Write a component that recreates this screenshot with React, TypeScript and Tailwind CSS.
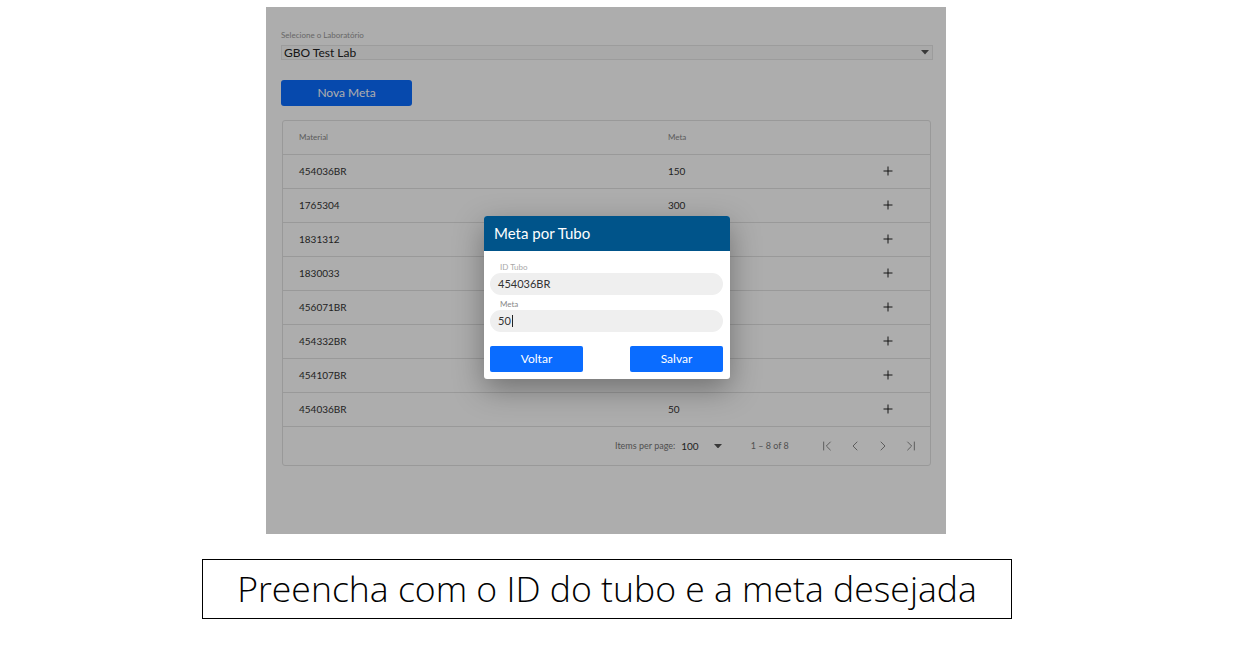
import { ChevronFirst, ChevronLast, ChevronLeft, ChevronRight, Plus } from "lucide-react";

const rows = [
  { material: "454036BR", meta: "150" },
  { material: "1765304", meta: "300" },
  { material: "1831312", meta: "" },
  { material: "1830033", meta: "" },
  { material: "456071BR", meta: "" },
  { material: "454332BR", meta: "" },
  { material: "454107BR", meta: "" },
  { material: "454036BR", meta: "50" },
];

function Caret({ w = 9 }: { w?: number }) {
  return (
    <svg width={w} height={w / 2 + 0.5} viewBox="0 0 9 5" className="fill-[#555]">
      <path d="M0 0h9L4.5 5z" />
    </svg>
  );
}

function MetaModal() {
  return (
    <div className="absolute left-[218px] top-[209px] w-[246px] rounded-[3px] bg-white shadow-[0_10px_30px_rgba(0,0,0,0.35)]">
      <div className="flex h-[35px] items-center rounded-t-[3px] bg-[#00548a] pl-[10px] text-[15px] text-white">
        Meta por Tubo
      </div>
      <div className="pl-[6px] pr-[7px] pt-[11px] pb-[7px]">
        <div className="h-[10px] pl-[10px] text-[8px] leading-[10px] text-[#a8a8a8]">ID Tubo</div>
        <div className="mt-[1px] flex h-[22px] items-center rounded-full bg-[#efefef] pl-[8px] text-[11px] text-[#333]">
          454036BR
        </div>
        <div className="mt-[4px] h-[10px] pl-[10px] text-[8px] leading-[10px] text-[#888]">Meta</div>
        <div className="mt-[1px] flex h-[22px] items-center rounded-full bg-[#efefef] pl-[8px] text-[11px] text-[#333]">
          50<span className="ml-[1px] h-[12px] w-px bg-[#222]" />
        </div>
        <div className="mt-[14px] flex justify-between">
          <button className="h-[26px] w-[93px] rounded-[2px] bg-[#0a6cff] text-[12px] text-white">Voltar</button>
          <button className="h-[26px] w-[93px] rounded-[2px] bg-[#0a6cff] text-[12px] text-white">Salvar</button>
        </div>
      </div>
    </div>
  );
}

function Screen() {
  return (
    <div className="relative h-[527px] w-[680px] overflow-hidden bg-white font-['Lato',sans-serif]">
      <div className="px-[15px] pt-[23px]">
        <div className="h-[11px] text-[8px] leading-[11px] text-[#999]">Selecione o Laboratório</div>
        <div className="mt-[4px] flex h-[15px] w-[652px] items-center justify-between border border-[#e6e6e6] bg-[#fafafa] pl-[2px] pr-[3px] text-[12px] text-[#222]">
          <span>GBO Test Lab</span>
          <Caret w={8} />
        </div>
        <button className="mt-[20px] h-[26px] w-[131px] rounded-[3px] bg-[#0a6cff] text-[12px] text-white">
          Nova Meta
        </button>

        <div className="ml-px mt-[14px] w-[649px] rounded-[3px] border border-[#e2e2e2] text-[10px] text-[#333]">
          <div className="flex h-[33px] items-center pl-[16px] pb-px text-[8px] text-[#888]">
            <div className="w-[369px]">Material</div>
            <div className="flex-1">Meta</div>
          </div>
          {rows.map((r, i) => (
            <div key={i} className="flex h-[34px] items-center border-t border-[#e2e2e2] pb-px pl-[16px]">
              <div className="w-[369px]">{r.material}</div>
              <div className="flex-1">{r.meta}</div>
              <div className="mr-[22px] flex w-[40px] justify-center text-[#111]">
                <Plus size={14} strokeWidth={1.6} />
              </div>
            </div>
          ))}
          <div className="flex h-[39px] items-center border-t border-[#e2e2e2] pl-[332px] text-[#777]">
            <span className="text-[9px]">Items per page:</span>
            <span className="ml-[6px] text-[10px] text-[#333]">100</span>
            <span className="ml-[15px]">
              <Caret w={8} />
            </span>
            <span className="ml-[29px] text-[9px]">1 – 8 of 8</span>
            <div className="ml-[30px] flex items-center gap-[12px] text-[#777]">
              <ChevronFirst size={16} strokeWidth={1.3} />
              <ChevronLeft size={16} strokeWidth={1.3} />
              <ChevronRight size={16} strokeWidth={1.3} />
              <ChevronLast size={16} strokeWidth={1.3} />
            </div>
          </div>
        </div>
      </div>

      <div className="absolute inset-0 bg-[rgba(0,0,0,0.32)]" />
      <MetaModal />
    </div>
  );
}

export default function App() {
  return (
    <div className="h-[648px] w-[1245px] bg-white pt-[7px]">
      <div className="pl-[266px]">
        <Screen />
      </div>
      <div className="ml-[202px] mt-[25px] flex h-[60px] w-[810px] items-center justify-center border border-black font-['Open_Sans',sans-serif] text-[35.6px] font-light text-black">
        Preencha com o ID do tubo e a meta desejada
      </div>
    </div>
  );
}
